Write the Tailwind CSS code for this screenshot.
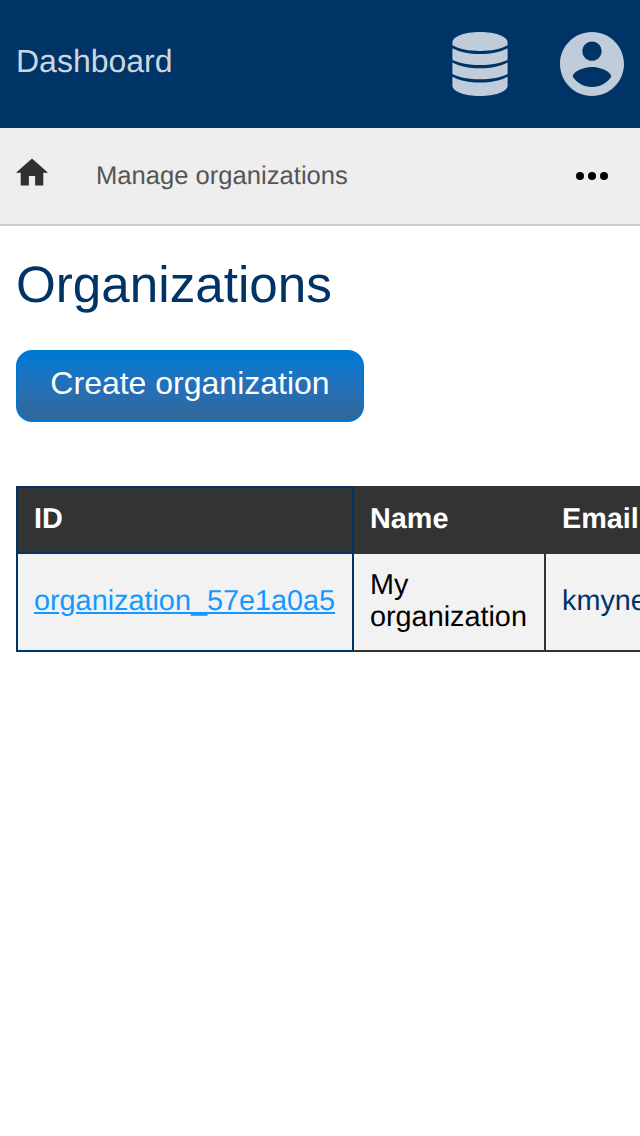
<!DOCTYPE html>
<html lang="en">
<head>
<meta charset="utf-8">
<title>Organizations</title>
<script src="https://cdn.jsdelivr.net/npm/@tailwindcss/browser@4"></script>
</head>
<body class="h-[1136px] overflow-hidden bg-white font-['Liberation_Sans',Arial,sans-serif] text-black [text-rendering:geometricPrecision]">
<header class="flex h-32 items-center justify-between bg-[#003366] px-4">
  <a class="pb-1.5 text-[32px] leading-10 text-[#ccd6e0]">Dashboard</a>
  <div class="flex gap-[52px]">
    <svg class="h-16 w-14" viewBox="0 0 56 64" fill="#c0ccd9">
      <path d="M.4 10.500C.4 4.500 12.500 0 28 0s27.600 4.500 27.600 10.500v2.700C49 17 39 18.900 28 18.900S7 17 .4 13.200z"/>
      <path d="M.4 16.300C7 20.200 17 22.100 28 22.100S49 20.200 55.600 16.300v11.400C49 31.200 39 33 28 33S7 31.200.4 27.700z"/>
      <path d="M.4 30.500C7 34.400 17 36.300 28 36.300S49 34.400 55.600 30.500v11.500C49 45.500 39 47.300 28 47.300S7 45.500.4 42z"/>
      <path d="M.4 44.700C7 48.600 17 50.500 28 50.500S49 48.600 55.600 44.700v8.800C55.600 59.500 43.500 64 28 64S.4 59.500.4 53.500z"/>
    </svg>
    <svg class="size-16" viewBox="2 2 20 20" fill="#c0ccd9">
      <path d="M12 2C6.480 2 2 6.480 2 12s4.480 10 10 10 10-4.480 10-10S17.520 2 12 2zm0 3c1.660 0 3 1.340 3 3s-1.340 3-3 3-3-1.340-3-3 1.340-3 3-3zm0 14.200c-2.500 0-4.710-1.280-6-3.220.030-1.990 4-3.080 6-3.080 1.990 0 5.970 1.090 6 3.080-1.290 1.940-3.500 3.220-6 3.220z"/>
    </svg>
  </div>
</header>
<nav class="flex h-[98px] items-center border-b-2 border-[#cccccc] bg-[#eeeeee] pl-4 pr-8">
  <svg class="mb-2 h-7 w-8" viewBox="0 0 32 28" fill="#303030"><path d="M16 .4L0 14.800h4.700V27.600h8.200V18h6.200v9.600h8.200V14.800H32z"/></svg>
  <span class="ml-12 text-[25.6px] leading-8 text-[#555555]">Manage organizations</span>
  <svg class="ml-auto h-2 w-8" viewBox="0 0 32 8"><circle cx="4" cy="4" r="4"/><circle cx="16" cy="4" r="4"/><circle cx="28" cy="4" r="4"/></svg>
</nav>
<main class="overflow-hidden px-4 pt-[30px]">
  <h1 class="text-[51.2px] leading-[58px] text-[#003366]">Organizations</h1>
  <button class="mt-9 flex h-[72px] w-[348px] justify-center rounded-2xl border-2 border-[#0078d0] bg-linear-to-b from-[#0078d0] from-10% to-[#336699] pt-[11px] text-[32px] leading-10 text-white">Create organization</button>
  <div class="mt-16 flex w-[900px] text-[28.8px] leading-8">
    <div class="w-[338px] shrink-0 border-2 border-[#003366]">
      <div class="h-[66px] border-b-2 border-[#003366] bg-[#333333] px-4 pt-[15px] font-bold text-white">ID</div>
      <div class="flex h-24 items-center bg-[#f2f2f2] px-4 pb-0.5"><a class="text-[#1199ff] underline">organization_57e1a0a5</a></div>
    </div>
    <div class="w-48 shrink-0 border-y-2 border-[#333333]">
      <div class="h-[66px] bg-[#333333] px-4 pt-[15px] font-bold text-white">Name</div>
      <div class="flex h-24 items-center border-r-2 border-[#333333] bg-[#f2f2f2] px-4 pb-0.5">My<br>organization</div>
    </div>
    <div class="flex-1 border-y-2 border-[#333333]">
      <div class="h-[66px] bg-[#333333] px-4 pt-[15px] font-bold text-white">Email</div>
      <div class="flex h-24 items-center bg-[#f2f2f2] px-4 pb-0.5 text-[#003366]">kmyne</div>
    </div>
  </div>
</main>
</body>
</html>
